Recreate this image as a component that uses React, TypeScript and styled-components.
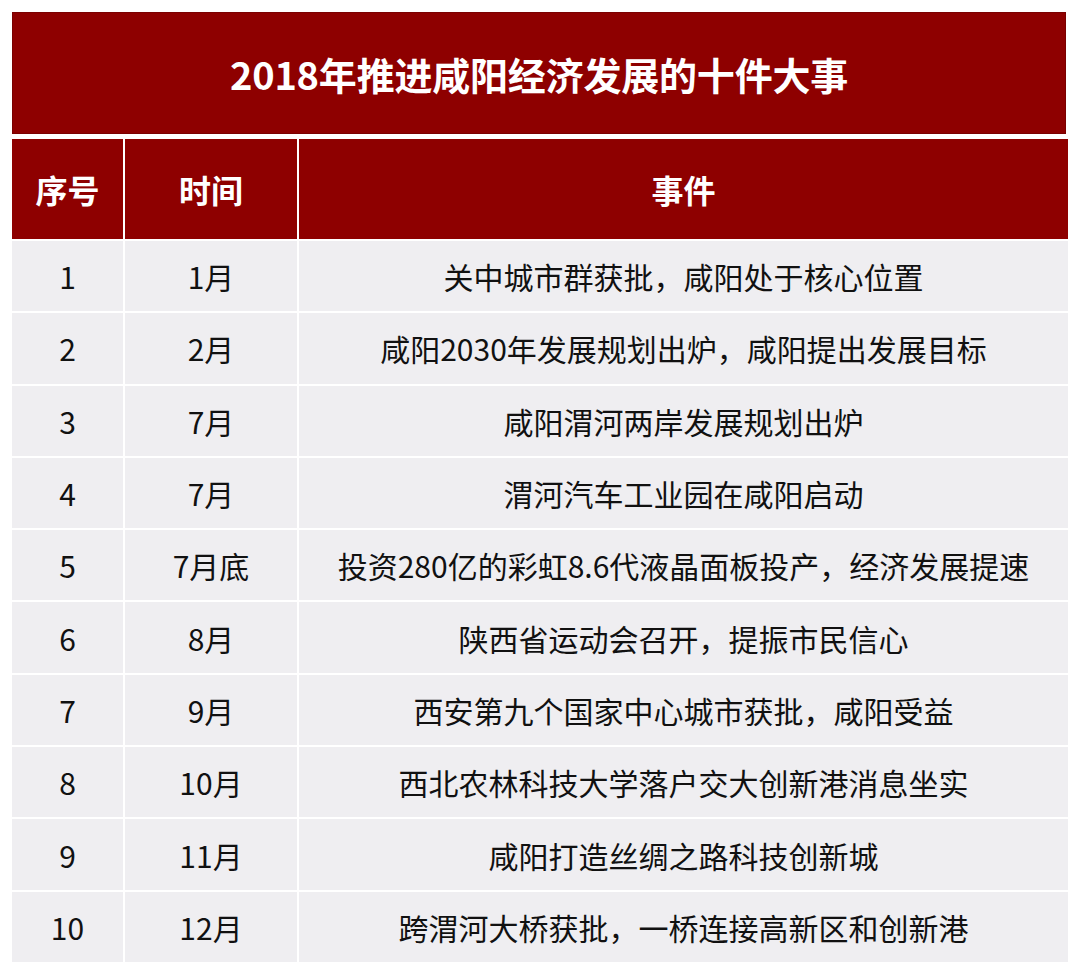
import React from 'react';
import styled, { createGlobalStyle } from 'styled-components';

const GlobalStyle = createGlobalStyle`
	body {
		margin: 0;
		background: #ffffff;
		font-family: 'Noto Sans CJK SC', 'Noto Sans', sans-serif;
	}
`;

const Page = styled.div`
	width: 1080px;
	height: 974px;
	padding: 12px 12px 0 12px;
	box-sizing: border-box;
	background: #ffffff;
`;

const TitleBar = styled.div`
	height: 122px;
	margin-right: 2px;
	background: #8e0000;
	border: 1px solid #7a0000;
	box-sizing: border-box;
	display: flex;
	align-items: center;
	justify-content: center;
	color: #ffffff;
	font-size: 38px;
	font-weight: 700;
	letter-spacing: -0.2px;
`;

const Table = styled.div`
	margin-top: 5px;
	display: grid;
	grid-template-columns: 111px 172px 1fr;
	grid-template-rows: 100px;
	grid-auto-rows: 70.3px;
	gap: 2px;
	background: #ffffff;
`;

const HeadCell = styled.div`
	background: #8e0000;
	color: #ffffff;
	display: flex;
	align-items: center;
	justify-content: center;
	font-size: 32px;
	font-weight: 700;
`;

const Cell = styled.div`
	background: #efeef1;
	color: #111111;
	display: flex;
	align-items: center;
	justify-content: center;
	font-size: 30px;
	font-weight: 400;
	white-space: nowrap;
`;

const events = [
	{ no: '1', month: '1月', text: '关中城市群获批，咸阳处于核心位置' },
	{ no: '2', month: '2月', text: '咸阳2030年发展规划出炉，咸阳提出发展目标' },
	{ no: '3', month: '7月', text: '咸阳渭河两岸发展规划出炉' },
	{ no: '4', month: '7月', text: '渭河汽车工业园在咸阳启动' },
	{ no: '5', month: '7月底', text: '投资280亿的彩虹8.6代液晶面板投产，经济发展提速' },
	{ no: '6', month: '8月', text: '陕西省运动会召开，提振市民信心' },
	{ no: '7', month: '9月', text: '西安第九个国家中心城市获批，咸阳受益' },
	{ no: '8', month: '10月', text: '西北农林科技大学落户交大创新港消息坐实' },
	{ no: '9', month: '11月', text: '咸阳打造丝绸之路科技创新城' },
	{ no: '10', month: '12月', text: '跨渭河大桥获批，一桥连接高新区和创新港' },
];

function App() {
	return (
		<Page>
			<GlobalStyle />
			<TitleBar>2018年推进咸阳经济发展的十件大事</TitleBar>
			<Table>
				<HeadCell>序号</HeadCell>
				<HeadCell>时间</HeadCell>
				<HeadCell>事件</HeadCell>
				{events.map((el) => (
					<React.Fragment key={el.no}>
						<Cell>{el.no}</Cell>
						<Cell>{el.month}</Cell>
						<Cell>{el.text}</Cell>
					</React.Fragment>
				))}
			</Table>
		</Page>
	);
}

export default App;
